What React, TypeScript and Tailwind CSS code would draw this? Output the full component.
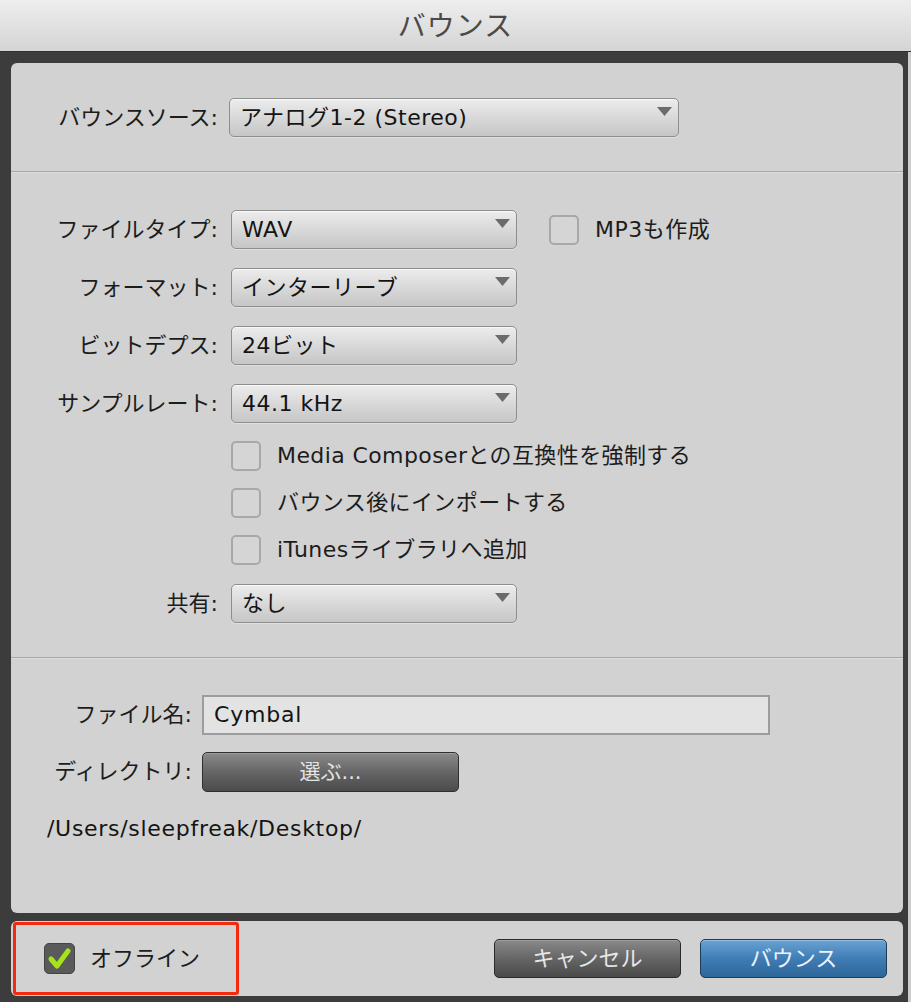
import React from "react";

const FONT = { fontFamily: '"DejaVu Sans", "Noto Sans CJK JP", sans-serif' };

function Arrow() {
  return (
    <svg className="absolute right-[6px] top-[8px]" width="15" height="9" viewBox="0 0 15 9">
      <polygon points="0,0 15,0 7.5,9" fill="#6b6b6b" />
    </svg>
  );
}

function Dropdown({ text, w }: { text: string; w: string }) {
  return (
    <div
      className={`relative h-[39px] ${w} rounded-[5px] border border-[#8e8e8e] bg-linear-to-b from-[#ececec] to-[#c6c6c6] shadow-[inset_0_1px_0_#f8f8f8,0_1px_0_#e0e0e0] flex items-center pl-[10px] text-[22px] text-[#141414] leading-none tracking-[0.5px]`}
    >
      <span className="whitespace-nowrap">{text}</span>
      <Arrow />
    </div>
  );
}

function Box() {
  return <div className="h-[30px] w-[30px] shrink-0 rounded-[5px] border-2 border-[#a8a8a8] bg-[#d5d5d5]" />;
}

function Label({ children, w }: { children: React.ReactNode; w: string }) {
  return (
    <div className={`${w} shrink-0 text-right text-[22px] text-[#1c1c1c] whitespace-nowrap leading-none`}>{children}</div>
  );
}

function Separator() {
  return (
    <div className="flex flex-col">
      <div className="h-[1px] bg-[#a6a6a6]" />
      <div className="h-[1px] bg-[#dedede]" />
    </div>
  );
}

export default function App() {
  return (
    <div className="w-[911px] h-[1002px] bg-[#3c3c3c] flex flex-col overflow-hidden" style={FONT}>
      {/* title bar */}
      <div className="h-[52px] shrink-0 bg-linear-to-b from-[#eeeeee] to-[#d4d4d4] border-b border-[#2e2e2e] flex items-center justify-center pt-[3px]">
        <span className="text-[28px] text-[#4a4a4a] leading-none tracking-[1px]">バウンス</span>
      </div>

      <div className="flex-1 flex flex-col pl-[11px] pr-[5px] border-r-[3px] border-[#cdcdcd]">
        {/* main panel */}
        <div className="mt-[11px] h-[850px] shrink-0 rounded-[6px] bg-[#d2d2d2] flex flex-col">
          {/* section 1 */}
          <div className="h-[108px] pt-[35px] flex items-start">
            <div className="flex items-center h-[39px]">
              <Label w="w-[207px]">バウンスソース:</Label>
              <div className="ml-[11px]">
                <Dropdown text="アナログ1-2 (Stereo)" w="w-[450px]" />
              </div>
            </div>
          </div>
          <Separator />
          {/* section 2 */}
          <div className="h-[484px] pt-[37px] flex flex-col">
            <div className="flex items-center h-[39px]">
              <Label w="w-[207px]">ファイルタイプ:</Label>
              <div className="ml-[13px]">
                <Dropdown text="WAV" w="w-[286px]" />
              </div>
              <div className="ml-[32px]">
                <Box />
              </div>
              <span className="ml-[16px] text-[22px] text-[#1c1c1c] leading-none whitespace-nowrap tracking-[0.5px]">MP3も作成</span>
            </div>
            <div className="flex items-center h-[39px] mt-[19px]">
              <Label w="w-[207px]">フォーマット:</Label>
              <div className="ml-[13px]">
                <Dropdown text="インターリーブ" w="w-[286px]" />
              </div>
            </div>
            <div className="flex items-center h-[39px] mt-[19px]">
              <Label w="w-[207px]">ビットデプス:</Label>
              <div className="ml-[13px]">
                <Dropdown text="24ビット" w="w-[286px]" />
              </div>
            </div>
            <div className="flex items-center h-[39px] mt-[19px]">
              <Label w="w-[207px]">サンプルレート:</Label>
              <div className="ml-[13px]">
                <Dropdown text="44.1 kHz" w="w-[286px]" />
              </div>
            </div>
            <div className="flex flex-col gap-[17px] mt-[18px] pl-[220px]">
              {["Media Composerとの互換性を強制する", "バウンス後にインポートする", "iTunesライブラリへ追加"].map((t) => (
                <div key={t} className="flex items-center h-[30px]">
                  <Box />
                  <span className="ml-[16px] text-[22px] text-[#1c1c1c] leading-none whitespace-nowrap tracking-[0.4px]">{t}</span>
                </div>
              ))}
            </div>
            <div className="flex items-center h-[39px] mt-[19px]">
              <Label w="w-[207px]">共有:</Label>
              <div className="ml-[13px]">
                <Dropdown text="なし" w="w-[286px]" />
              </div>
            </div>
          </div>
          <Separator />
          {/* section 3 */}
          <div className="flex-1 pt-[36px] flex flex-col">
            <div className="flex items-center h-[40px]">
              <Label w="w-[181px]">ファイル名:</Label>
              <div className="ml-[10px] h-[40px] w-[568px] border-2 border-[#9c9c9c] bg-[#e3e3e3] flex items-center pl-[10px] text-[22px] text-[#141414] leading-none tracking-[0.8px]">
                Cymbal
              </div>
            </div>
            <div className="flex items-center h-[40px] mt-[17px]">
              <Label w="w-[181px]">ディレクトリ:</Label>
              <div className="ml-[10px] h-[40px] w-[257px] rounded-[5px] border border-[#2f2f2f] bg-linear-to-b from-[#8a8a8a] via-[#666666] to-[#4b4b4b] shadow-[inset_0_1px_0_#9c9c9c] flex items-center justify-center text-[21px] text-[#e4e4e4] leading-none">
                選ぶ...
              </div>
            </div>
            <div className="mt-[26px] pl-[36px] text-[22px] text-[#141414] leading-none whitespace-nowrap tracking-[0.7px]">/Users/sleepfreak/Desktop/</div>
          </div>
        </div>

        {/* bottom panel */}
        <div className="relative mt-[8px] h-[75px] shrink-0 rounded-[6px] bg-[#d2d2d2] flex items-center">
          <div className="ml-[33px] h-[31px] w-[31px] rounded-[5px] bg-[#5a5a5a] border border-[#444444] flex items-center justify-center">
            <svg width="25" height="25" viewBox="0 0 25 25">
              <path d="M4 13 L10 20 L21 5" fill="none" stroke="#a6e41a" strokeWidth="5" strokeLinecap="round" strokeLinejoin="round" />
            </svg>
          </div>
          <span className="ml-[15px] text-[22px] text-[#1c1c1c] leading-none">オフライン</span>
          <div className="ml-auto flex items-center gap-[19px] mr-[16px]">
            <div className="h-[39px] w-[187px] rounded-[5px] border border-[#2b2b2b] bg-linear-to-b from-[#8a8a8a] via-[#666666] to-[#4a4a4a] shadow-[inset_0_1px_0_#9e9e9e] flex items-center justify-center text-[22px] text-[#e6e6e6] leading-none">
              キャンセル
            </div>
            <div className="h-[39px] w-[187px] rounded-[5px] border border-[#1d3c5a] bg-linear-to-b from-[#6aa3d3] via-[#3f7db5] to-[#2d6699] shadow-[inset_0_1px_0_#8fbde3] flex items-center justify-center text-[22px] text-[#eef3f8] leading-none">
              バウンス
            </div>
          </div>
          <div className="absolute left-[2px] top-[1px] h-[73px] w-[226px] rounded-[3px] border-[3px] border-[#f4290e]" />
        </div>
      </div>
    </div>
  );
}
